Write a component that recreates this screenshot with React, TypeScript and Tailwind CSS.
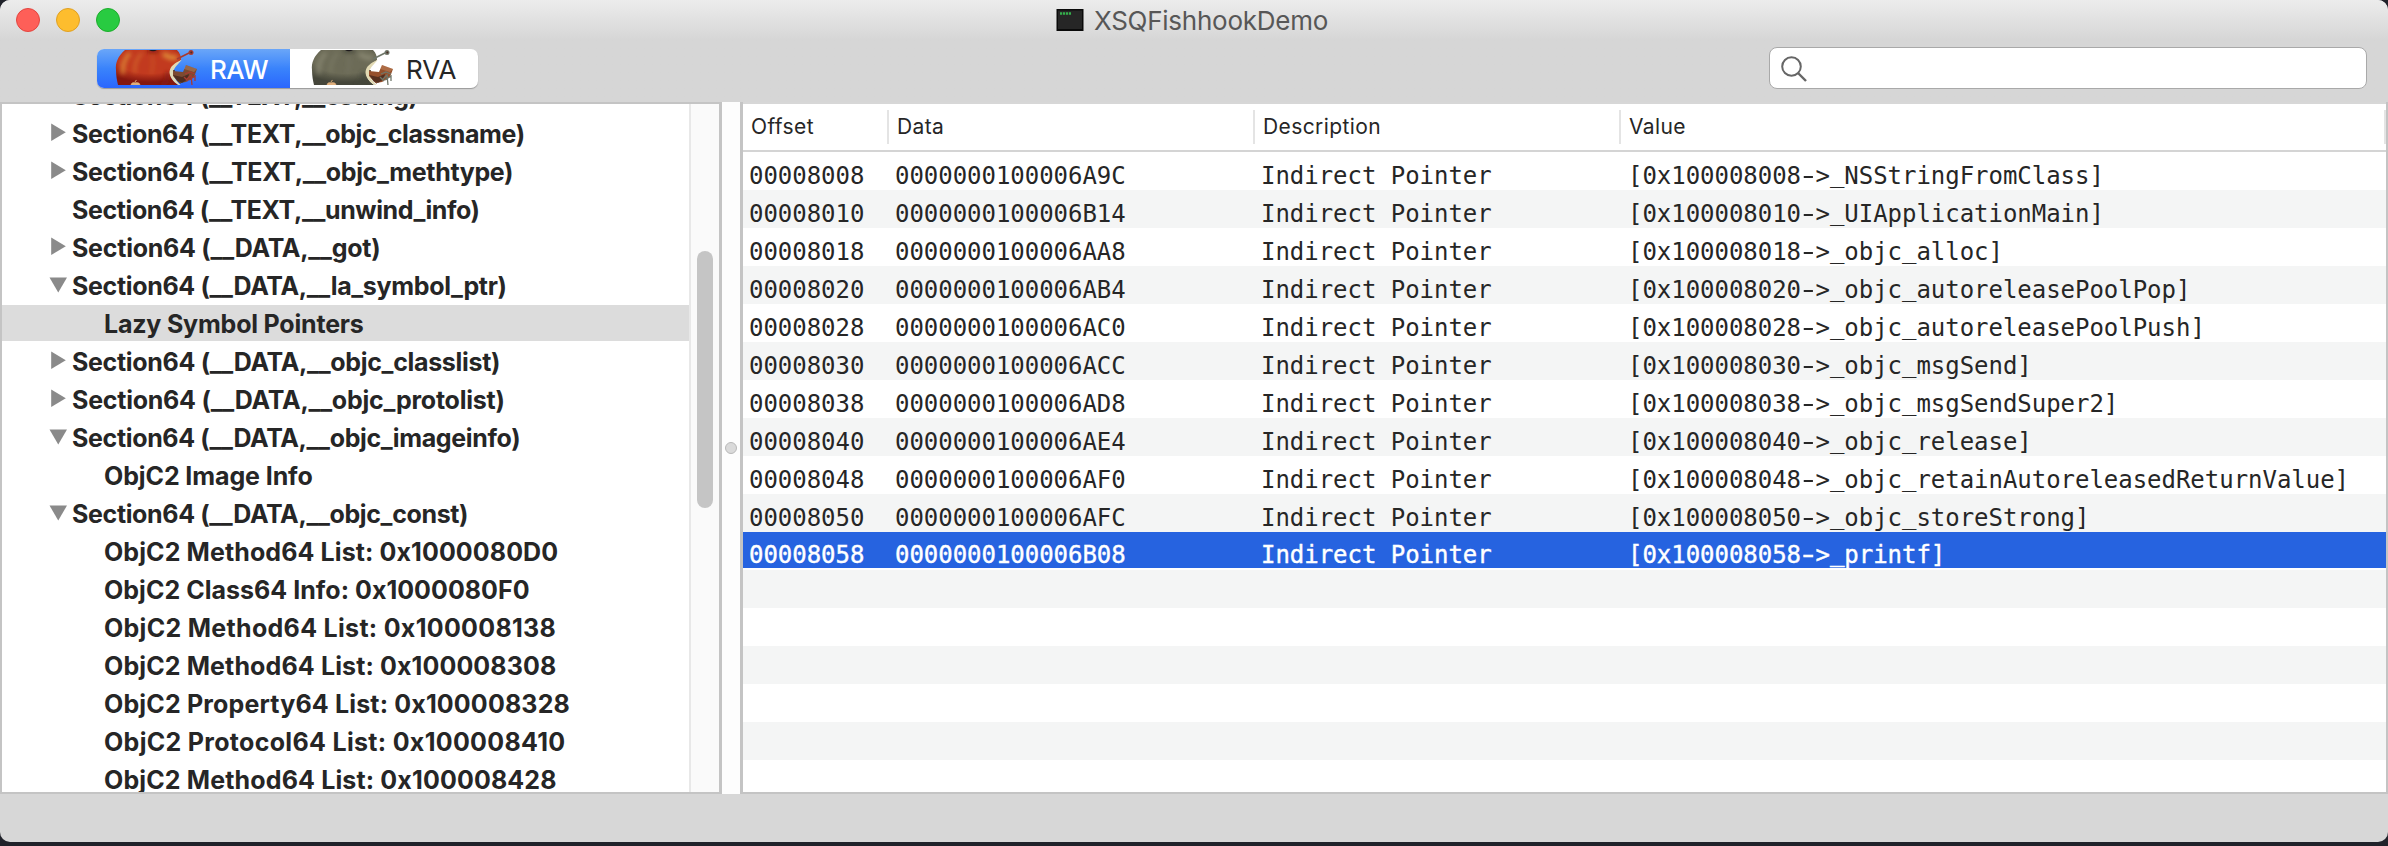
import React from "react";

type Node = { label: string; level: 0 | 1; state?: "open" | "closed"; selected?: boolean; fit: string };

const nodes: Node[] = [
  { label: "Section64 (__TEXT,__cstring)", level: 0, state: "closed", fit: "tracking-[-0.4px]" },
  { label: "Section64 (__TEXT,__objc_classname)", level: 0, state: "closed", fit: "tracking-[-0.39px]" },
  { label: "Section64 (__TEXT,__objc_methtype)", level: 0, state: "closed", fit: "tracking-[-0.36px]" },
  { label: "Section64 (__TEXT,__unwind_info)", level: 0, fit: "tracking-[-0.4px]" },
  { label: "Section64 (__DATA,__got)", level: 0, state: "closed", fit: "tracking-[-0.25px]" },
  { label: "Section64 (__DATA,__la_symbol_ptr)", level: 0, state: "open", fit: "tracking-[-0.34px]" },
  { label: "Lazy Symbol Pointers", level: 1, selected: true, fit: "tracking-[-0.2px]" },
  { label: "Section64 (__DATA,__objc_classlist)", level: 0, state: "closed", fit: "tracking-[-0.32px]" },
  { label: "Section64 (__DATA,__objc_protolist)", level: 0, state: "closed", fit: "tracking-[-0.24px]" },
  { label: "Section64 (__DATA,__objc_imageinfo)", level: 0, state: "open", fit: "tracking-[-0.35px]" },
  { label: "ObjC2 Image Info", level: 1, fit: "tracking-[-0.1px]" },
  { label: "Section64 (__DATA,__objc_const)", level: 0, state: "open", fit: "tracking-[-0.36px]" },
  { label: "ObjC2 Method64 List: 0x1000080D0", level: 1, fit: "tracking-[0.1px]" },
  { label: "ObjC2 Class64 Info: 0x1000080F0", level: 1, fit: "tracking-[0.03px]" },
  { label: "ObjC2 Method64 List: 0x100008138", level: 1, fit: "tracking-[0.3px]" },
  { label: "ObjC2 Method64 List: 0x100008308", level: 1, fit: "tracking-[0.12px]" },
  { label: "ObjC2 Property64 List: 0x100008328", level: 1, fit: "tracking-[0.16px]" },
  { label: "ObjC2 Protocol64 List: 0x100008410", level: 1, fit: "tracking-[0.31px]" },
  { label: "ObjC2 Method64 List: 0x100008428", level: 1, fit: "tracking-[0.14px]" },
];

const rows: [string, string, string][] = [
  ["00008008", "0000000100006A9C", "_NSStringFromClass"],
  ["00008010", "0000000100006B14", "_UIApplicationMain"],
  ["00008018", "0000000100006AA8", "_objc_alloc"],
  ["00008020", "0000000100006AB4", "_objc_autoreleasePoolPop"],
  ["00008028", "0000000100006AC0", "_objc_autoreleasePoolPush"],
  ["00008030", "0000000100006ACC", "_objc_msgSend"],
  ["00008038", "0000000100006AD8", "_objc_msgSendSuper2"],
  ["00008040", "0000000100006AE4", "_objc_release"],
  ["00008048", "0000000100006AF0", "_objc_retainAutoreleasedReturnValue"],
  ["00008050", "0000000100006AFC", "_objc_storeStrong"],
  ["00008058", "0000000100006B08", "_printf"],
];

function Apple({ id, light, mid, dark, bug, wood }: { id: string; light: string; mid: string; dark: string; bug: string; wood: string }) {
  return (
    <svg width="83" height="35" viewBox="0 0 83 35" className="block shrink-0">
      <defs>
        <radialGradient id={id} cx="0.42" cy="0.3" r="0.62">
          <stop offset="0" stopColor={mid} />
          <stop offset="0.6" stopColor={mid} />
          <stop offset="1" stopColor={dark} />
        </radialGradient>
        <filter id={`${id}-soft`} x="-20%" y="-20%" width="140%" height="140%">
          <feGaussianBlur stdDeviation="2.2" />
        </filter>
        <clipPath id={`${id}-body`}>
          <path d="M10 0C3 6 0 13 1 20c0 6 1 11 2 15h60c-5-4-8-8-8-13 1-6 7-9 11-12 0-4-1-7-4-10Z" />
        </clipPath>
      </defs>
      <g clipPath={`url(#${id}-body)`}>
        <rect width="83" height="35" fill={`url(#${id})`} />
        <g filter={`url(#${id}-soft)`} fill="none" stroke={light}>
          <path d="M15 3C9 9 7 16 8 24" strokeWidth="4" opacity="0.7" />
          <path d="M27 3c-6 6-8 13-7 20" strokeWidth="3" opacity="0.4" />
          <path d="M48 4c6 3 9 5 14 3" strokeWidth="5" opacity="0.8" />
          <path d="M37 6c2 7 1 12-1 18" strokeWidth="3" opacity="0.2" />
          <path d="M46 36c6-3 7-8 6-14" stroke={dark} strokeWidth="4" opacity="0.7" />
          <path d="M32 0q5 3 12 0" stroke={dark} strokeWidth="3" />
        </g>
        <path d="M34 0q4 2.5 8 0Z" fill="#1d1a1c" />
      </g>
      <path d="M66 10C60 13 55 16 54.5 22c0 5 4 10 9 13h2c-4-4-8-9-7-14 1-4 5-7 8-11Z" fill="#e2dab4" />
      <path d="M59 20q-1 7 7 13" fill="none" stroke="#4a3324" strokeWidth="1.6" />
      <path d="m62 9 6-3 6-3" fill="none" stroke={bug} strokeWidth="1.8" />
      <circle cx="76" cy="2.6" r="2.5" fill={bug} />
      <circle cx="76.3" cy="2.4" r="1" fill="#4b2b25" />
      <path d="m58 21 10 1 3-7 11 4-3 8-8 5-6 1-7-7Z" fill={wood} />
      <path d="m71 15 11 4-3 3-10-3Z" fill="#ffd2a0" opacity="0.22" />
      <path d="m58 25 9 2 7-3-1 5-6 4-4-2Z" fill="#3b2219" opacity="0.7" />
      <path d="m70 24 5-2 5 2M72 29l4-4 1 10M74 30l6-4v5M69 27l4 4" fill="none" stroke={bug} strokeWidth="1.3" />
      <path d="M16 35c0-2 2-3 4-2.2 3-.8 5 .2 5 2.2ZM20 32q0-1.5 1.6-1.7Z" fill="#dfae7c" stroke="#dfae7c" strokeWidth="0.5" />
    </svg>
  );
}

function Disclosure({ state }: { state?: "open" | "closed" }) {
  return (
    <svg width="18" height="18" viewBox="0 0 18 18" className="mt-[8px] mr-[5px] block shrink-0" fill="#8a8a8a">
      {state === "closed" && <path d="M2.2 0.5V18l14.6-8.75Z" />}
      {state === "open" && <path d="M0.5 2.5H18L9.25 17.5Z" />}
    </svg>
  );
}

function Tree() {
  return (
    <div className="flex w-[722px] shrink-0 border-y-2 border-r-[3px] border-l-2 border-[#c4c4c4] bg-white">
      <div className="h-[688px] grow overflow-hidden">
        <div className="-mt-[27px]">
          {nodes.map((n) => (
            <div
              key={n.label}
              className={`mb-[2px] flex h-[36px] items-start ${n.level ? "pl-[79px]" : "pl-[47px]"} ${n.selected ? "bg-[#dcdcdc]" : ""}`}
            >
              <Disclosure state={n.state} />
              <span className={`text-[25px] leading-[38px] font-bold whitespace-pre text-[#262626] ${n.fit}`}>{n.label}</span>
            </div>
          ))}
        </div>
      </div>
      <div className="w-[30px] shrink-0 border-l-2 border-[#e8e8e8] bg-[#fafafa] pt-[147px] pl-[6px]">
        <div className="h-[257px] w-[16px] rounded-full bg-[#c5c5c5]" />
      </div>
    </div>
  );
}

const headCell = "flex h-[34px] items-center border-r-2 border-[#e4e4e4] pl-[8px]";
const cols = "grid grid-cols-[146px_366px_366px_765px]";

function Pointer({ address, symbol }: { address: string; symbol: string }) {
  return (
    <span className="pl-[7px]">
      {`[0x10000${address}`}
      <span className="inline-block scale-x-150">-</span>
      {">"}
      {symbol.split(/(_)/).map((part, i) =>
        part === "_" ? <span key={i} className="inline-block -translate-y-[2px]">_</span> : part
      )}
      {"]"}
    </span>
  );
}

function Table() {
  return (
    <div className="h-[692px] grow overflow-hidden border-r-2 border-b-2 border-l-[3px] border-[#c4c4c4] bg-white">
      <div className={`${cols} h-[50px] border-t-2 border-b-2 border-t-[#d7d7d7] border-b-[#d4d4d4] pt-[6px] text-[21px] tracking-[0.4px] text-[#262626]`}>
        {["Offset", "Data", "Description", "Value"].map((h) => (
          <div key={h} className={headCell}>{h}</div>
        ))}
      </div>
      <div className="font-['DejaVu_Sans_Mono',monospace] text-[24px] leading-[48px] tracking-[-0.03px] text-[#262626]">
        {Array.from({ length: 17 }, (_, i) => {
          const r = rows[i];
          const tone =
            i === 10
              ? "border-b-2 border-white bg-[#2663e0] text-white [-webkit-text-stroke:0.4px_white] leading-[47px]"
              : i % 2 ? "bg-[#f4f5f5]" : "";
          return (
            <div key={i} className={`${cols} h-[38px] overflow-hidden whitespace-pre ${tone}`}>
              {r && (
                <>
                  <span className="pl-[6px]">{r[0]}</span>
                  <span className="pl-[6px]">{r[1]}</span>
                  <span className="pl-[6px]">Indirect Pointer</span>
                  <Pointer address={r[0].slice(4)} symbol={r[2]} />
                </>
              )}
            </div>
          );
        })}
      </div>
    </div>
  );
}

export default function App() {
  return (
    <div className="h-[846px] w-[2388px] overflow-hidden bg-[#20222a] font-['Inter',sans-serif]">
      <div className="flex h-[842px] flex-col overflow-hidden rounded-[10px] bg-[#d7d7d7]">
        <header className="h-[102px] shrink-0 bg-linear-to-b from-[#ececec] to-[#d6d6d6] to-[40px]">
          <div className="grid h-[40px] grid-cols-[1fr_auto_1fr]">
            <div className="flex items-center gap-[16px] pl-[16px]">
              <i className="size-[24px] rounded-full border border-[#e2453f] bg-[#fe5f58]" />
              <i className="size-[24px] rounded-full border border-[#dfa023] bg-[#fdbd2e]" />
              <i className="size-[24px] rounded-full border border-[#1dad2c] bg-[#28cb41]" />
            </div>
            <div className="flex items-center gap-[10px] pr-[4px] text-[26px] tracking-[-0.25px] text-[#575757]">
              <svg width="28" height="24" viewBox="0 0 28 24" className="block">
                <rect x="0.5" y="1" width="27" height="22" fill="#0a0a0a" />
                <rect x="2" y="2.5" width="24" height="18.5" fill="#262626" />
                <path d="M4 5.5h11" stroke="#35b04c" strokeWidth="2.4" strokeDasharray="2.2 0.8" />
              </svg>
              <span className="pt-px">XSQFishhookDemo</span>
            </div>
            <div />
          </div>
          <div className="flex items-start justify-between pr-[21px] pl-[97px]">
            <div className="mt-[9px] flex h-[39px] w-[381px] overflow-hidden rounded-[7px] bg-white text-[26px] shadow-[0_1px_1px_#9a9a9a]">
              <div className="flex w-[193px] gap-[12px] bg-linear-to-b from-[#6aa6f8] via-[#3a83fb] to-[#2b66fd] pt-px pl-[18px] text-white">
                <Apple id="red" light="#e39a3c" mid="#c23a1f" dark="#84170f" bug="#a83a30" wood="#7c4a31" />
                <span className="leading-[40px] font-medium tracking-[-0.6px]">RAW</span>
              </div>
              <div className="flex gap-[12px] pt-px pl-[21px] text-[#262626]">
                <Apple id="grey" light="#8d8c76" mid="#6c6b57" dark="#45463a" bug="#6f7669" wood="#96502c" />
                <span className="leading-[40px]">RVA</span>
              </div>
            </div>
            <div className="mt-[7px] flex h-[42px] w-[598px] items-center rounded-[8px] border border-[#a9a9a9] bg-white pt-[2px] pl-[11px]">
              <svg width="26" height="26" viewBox="0 0 26 26" fill="none" stroke="#666" strokeWidth="2">
                <circle cx="10.5" cy="10.5" r="9.3" />
                <path d="m17 17 8 8" strokeWidth="2.4" />
              </svg>
            </div>
          </div>
        </header>
        <main className="flex h-[692px] shrink-0">
          <Tree />
          <div className="flex w-[18px] shrink-0 items-center justify-center bg-[#fdfdfd]">
            <div className="size-[12px] rounded-full border border-[#b9b9b9] bg-[#dadada]" />
          </div>
          <Table />
        </main>
      </div>
    </div>
  );
}
